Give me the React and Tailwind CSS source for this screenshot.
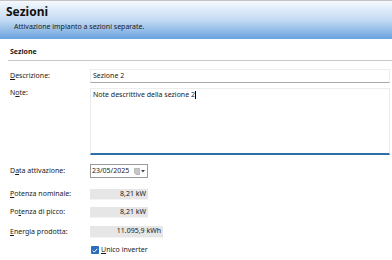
export default function App() {
  const rows = [
    { label: "Potenza nominale:", u: "P", rest: "otenza nominale:", value: "8,21 kW", box: "w-[58px] h-[11px]", gap: "" },
    { label: "Potenza di picco:", pre: "Po", u: "t", rest: "enza di picco:", value: "8,21 kW", box: "w-[58px] h-[11px]", gap: "mt-[7px]" },
    { label: "Energia prodotta:", u: "E", rest: "nergia prodotta:", value: "11.095,9 kWh", box: "w-[73px] h-[12px]", gap: "mt-[8px]" },
  ];

  return (
    <div className="w-[392px] h-[260px] bg-white overflow-hidden text-[7px] text-[#1a1a1a]" style={{ fontFamily: '"Noto Sans", sans-serif' }}>
      <div className="border-t border-[#c4c4c4] h-[39px] bg-gradient-to-b from-[#f5f9fe] via-[#c3daf2] to-[#6aa3de] px-[6px] pt-[4px]">
        <div className="text-[12px] font-bold leading-[14px] text-[#111]">Sezioni</div>
        <div className="pl-[8px] mt-[3px] leading-[10px]">Attivazione impianto a sezioni separate.</div>
      </div>

      <div className="pl-[8px] pt-[8px]">
        <div className="font-bold pl-[2px] leading-[10px]">Sezione</div>
        <div className="mt-[3px] h-px bg-[#c8c8c8]"></div>

        <div className="mt-[8px] flex items-center">
          <div className="w-[82px] pl-[2px]"><span className="underline">D</span>escrizione:</div>
          <div className="w-[300px] h-[14px] border border-[#ececec] border-b-[#a8a8a8] px-[2px] flex items-center">Sezione 2</div>
        </div>

        <div className="mt-[5px] flex items-start">
          <div className="w-[82px] pl-[2px]">N<span className="underline">o</span>te:</div>
          <div className="w-[300px] h-[67px] border border-[#ececec] border-b-2 border-b-[#2f6fa5] px-[2px] pt-[1px]">
            Note descrittive della sezione 2<span className="inline-block w-px h-[8px] bg-black align-middle"></span>
          </div>
        </div>

        <div className="mt-[9px] flex items-center">
          <div className="w-[82px] pl-[2px]">D<span className="underline">a</span>ta attivazione:</div>
          <div className="w-[58px] h-[14px] border border-[#9a9a9a] pl-[1px] pr-[2px] flex items-center justify-between">
            <span>23/05/2025</span>
            <span className="flex items-center gap-[1px]">
              <svg width="6" height="7" viewBox="0 0 6 7">
                <path d="M0.5 0.5h5v6h-3.5l-1.5-1.5z" fill="#c8c8c8" stroke="#9a9a9a" strokeWidth="0.6" />
              </svg>
              <svg width="4" height="3" viewBox="0 0 4 3">
                <path d="M0 0h4L2 2.5z" fill="#444" />
              </svg>
            </span>
          </div>
        </div>

        <div className="mt-[11px] flex flex-col">
          {rows.map((r) => (
            <div key={r.label} className={`${r.gap} flex items-center`}>
              <div className="w-[82px] pl-[2px]">
                {r.pre}<span className="underline">{r.u}</span>{r.rest}
              </div>
              <div className={`${r.box} bg-[#e6e6e6] border-b border-[#f4f4f4] pr-[2px] flex items-center justify-end`}>
                {r.value}
              </div>
            </div>
          ))}
        </div>

        <div className="mt-[7px] flex items-center pl-[83px]">
          <div className="w-[8px] h-[8px] rounded-[1px] bg-[#2a6cc0] flex items-center justify-center">
            <svg width="6" height="5" viewBox="0 0 6 5">
              <path d="M0.8 2.6l1.5 1.5l3-3.3" fill="none" stroke="white" strokeWidth="1" />
            </svg>
          </div>
          <span className="ml-[2px]"><span className="underline">U</span>nico inverter</span>
        </div>
      </div>
    </div>
  );
}
